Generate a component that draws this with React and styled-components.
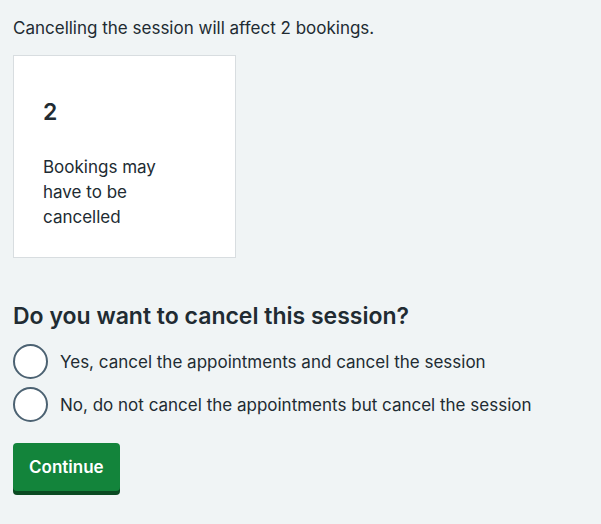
import React, { useState } from "react";
import styled, { createGlobalStyle } from "styled-components";

const GlobalStyle = createGlobalStyle`
  html, body {
    margin: 0;
    padding: 0;
    background: #f0f4f5;
  }
  body {
    font-family: Inter, "Noto Sans", Arial, sans-serif;
    color: #212b32;
    -webkit-font-smoothing: antialiased;
  }
`;

const Page = styled.main`
  padding: 16px 13px 28px;
`;

const Lead = styled.p`
  margin: 0 0 15px;
  font-size: 17px;
  line-height: 24px;
`;

const Card = styled.div`
  box-sizing: border-box;
  width: 223px;
  height: 203px;
  background: #ffffff;
  border: 1px solid #d8dde0;
  padding: 40px 29px;
  margin-bottom: 42px;
`;

const Count = styled.div`
  font-size: 23px;
  font-weight: 600;
  line-height: 32px;
  margin-bottom: 27px;
`;

const CardText = styled.p`
  margin: 0;
  font-size: 17px;
  line-height: 25px;
  width: 130px;
`;

const Fieldset = styled.fieldset`
  border: 0;
  margin: 0 0 21px;
  padding: 0;
`;

const Legend = styled.legend`
  padding: 0;
  margin-bottom: 12px;
  font-size: 23px;
  font-weight: 600;
  line-height: 32px;
`;

const Options = styled.div`
  display: flex;
  flex-direction: column;
  gap: 8px;
`;

const Option = styled.label`
  display: flex;
  align-items: center;
  gap: 12px;
  font-size: 17px;
  line-height: 24px;
  cursor: pointer;
`;

const Radio = styled.input.attrs({ type: "radio" })`
  appearance: none;
  margin: 0;
  width: 35px;
  height: 35px;
  border: 2px solid #4c6272;
  border-radius: 50%;
  background: #ffffff;
  box-sizing: border-box;
  flex-shrink: 0;
  position: relative;

  &:checked::after {
    content: "";
    position: absolute;
    inset: 6px;
    border-radius: 50%;
    background: #4c6272;
  }
`;

const Button = styled.button`
  font-family: inherit;
  font-size: 17px;
  font-weight: 600;
  color: #ffffff;
  background: #13843b;
  border: 0;
  border-radius: 4px;
  padding: 0 16px;
  height: 48px;
  box-shadow: 0 4px 0 #0b4a22;
  cursor: pointer;
`;

const options = [
  "Yes, cancel the appointments and cancel the session",
  "No, do not cancel the appointments but cancel the session",
];

export default function App() {
  const [choice, setChoice] = useState(null);

  return (
    <>
      <GlobalStyle />
      <Page>
        <Lead>Cancelling the session will affect 2 bookings.</Lead>
        <Card>
          <Count>2</Count>
          <CardText>Bookings may have to be cancelled</CardText>
        </Card>
        <Fieldset>
          <Legend>Do you want to cancel this session?</Legend>
          <Options>
            {options.map((text, i) => (
              <Option key={i}>
                <Radio
                  name="cancel"
                  checked={choice === i}
                  onChange={() => setChoice(i)}
                />
                {text}
              </Option>
            ))}
          </Options>
        </Fieldset>
        <Button>Continue</Button>
      </Page>
    </>
  );
}
